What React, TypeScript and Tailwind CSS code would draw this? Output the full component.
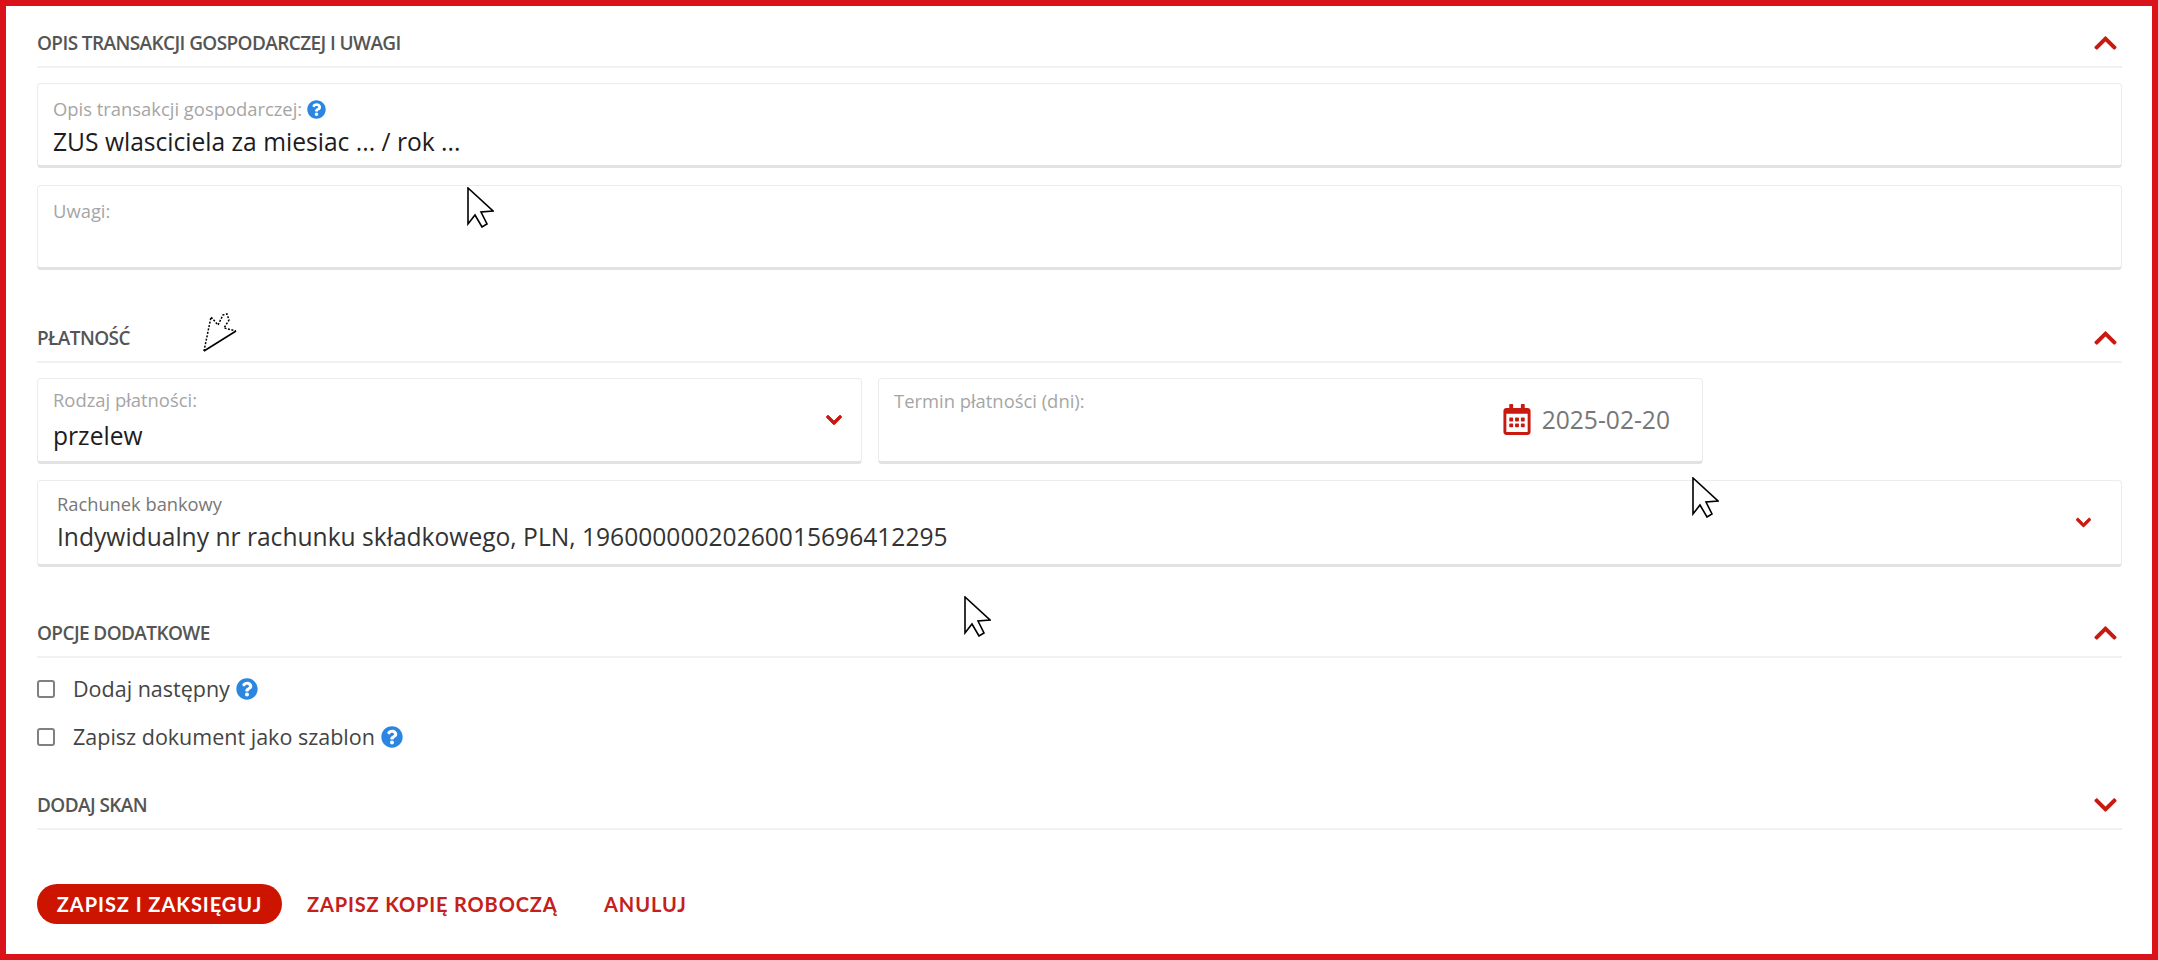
import React from "react";
import { FaChevronUp, FaChevronDown, FaQuestionCircle, FaRegCalendarAlt } from "react-icons/fa";

function Cursor({ className }: { className: string }) {
  return (
    <svg className={`absolute ${className}`} width="27" height="41" viewBox="0 0 27 41">
      <path d="M1 1 L1 37 L8 28 L15 40 L20 37 L14 25 L26 24 Z" fill="#fff" stroke="#000" strokeWidth="1.6" strokeLinejoin="miter" />
    </svg>
  );
}

function RotatedCursor({ className }: { className: string }) {
  return (
    <svg className={`absolute ${className}`} width="36" height="41" viewBox="0 0 36 41">
      <path d="M1 39 L8 5 L15 13 L20 3 L24 2 L26 8 L21 16 L33 19 Z" fill="#fff" />
      <path d="M1 39 L8 5 L15 13 L20 3 L24 2 L26 8 L21 16 L33 19" fill="none" stroke="#000" strokeWidth="1.5" strokeDasharray="2 1.5" />
      <path d="M1 39 L33 19" fill="none" stroke="#000" strokeWidth="1.6" />
    </svg>
  );
}

function Heading({ title, open = true }: { title: string; open?: boolean }) {
  return (
    <div className="flex h-[49px] items-center justify-between border-b-2 border-[#f1f1f1] pr-[5px]">
      <span className="pt-[2px] text-[19px] font-semibold tracking-[-0.6px] text-[#555555]">{title}</span>
      {open ? (
        <FaChevronUp className="h-[26px] w-[23px] text-[#c91a12]" />
      ) : (
        <FaChevronDown className="h-[26px] w-[23px] text-[#c91a12]" />
      )}
    </div>
  );
}

function Help({ size }: { size: string }) {
  return <FaQuestionCircle className={`${size} text-[#2b86e2]`} />;
}

function SelectChevron({ size }: { size: string }) {
  return <FaChevronDown className={`${size} text-[#c91a12]`} stroke="currentColor" strokeWidth={25} />;
}

function Field({ children, className }: { children: React.ReactNode; className: string }) {
  return (
    <div className={`rounded-[4px] border border-[#ececec] border-b-[3px] border-b-[#e2e2e2] bg-white ${className}`}>
      {children}
    </div>
  );
}

export default function App() {
  return (
    <div
      className="relative box-border h-[960px] w-full overflow-hidden border-[6px] border-[#da131b] bg-white pl-[31px] pr-[30px] pt-[13px]"
      style={{ fontFamily: '"Open Sans", sans-serif' }}
    >
      <Heading title="OPIS TRANSAKCJI GOSPODARCZEJ I UWAGI" />
      <Field className="mt-[15px] h-[85px] px-[15px] pt-[14px]">
        <div className="flex h-[22px] items-center gap-[5px] text-[18.4px] text-[#a5a5a5]">
          Opis transakcji gospodarczej:
          <Help size="h-[19px] w-[19px]" />
        </div>
        <div className="mt-[6px] h-[32px] text-[24.6px] leading-[32px] text-[#1c1c1c]">
          ZUS wlasciciela za miesiac ... / rok ...
        </div>
      </Field>
      <Field className="mt-[17px] h-[85px] px-[15px] pt-[14px]">
        <div className="h-[22px] text-[18.4px] leading-[22px] text-[#a5a5a5]">Uwagi:</div>
      </Field>

      <div className="mt-[44px]">
        <Heading title="PŁATNOŚĆ" />
      </div>
      <div className="mt-[15px] flex gap-[16px]">
        <Field className="flex h-[86px] w-[825px] items-center justify-between pl-[15px] pr-[19px]">
          <div>
            <div className="h-[22px] text-[18.4px] leading-[22px] text-[#a5a5a5]">Rodzaj płatności:</div>
            <div className="mt-[9px] h-[32px] text-[24.6px] leading-[32px] text-[#1c1c1c]">przelew</div>
          </div>
          <SelectChevron size="h-[18px] w-[16px]" />
        </Field>
        <Field className="flex h-[86px] w-[825px] items-center justify-between pl-[15px] pr-[32px]">
          <div className="h-[60px] text-[18.4px] leading-[22px] text-[#a5a5a5]">Termin płatności (dni):</div>
          <div className="flex items-center gap-[11px]">
            <FaRegCalendarAlt className="h-[31px] w-[28px] text-[#c91a12]" />
            <span className="text-[24.6px] text-[#777777]">2025-02-20</span>
          </div>
        </Field>
      </div>
      <Field className="mt-[16px] flex h-[87px] items-center justify-between pl-[19px] pr-[30px]">
        <div>
          <div className="h-[22px] text-[18.3px] leading-[22px] text-[#777777]">Rachunek bankowy</div>
          <div className="mt-[6px] h-[32px] text-[24.6px] leading-[32px] text-[#333333]">
            Indywidualny nr rachunku składkowego, PLN, 19600000020260015696412295
          </div>
        </div>
        <SelectChevron size="h-[17px] w-[15px]" />
      </Field>

      <div className="mt-[42px]">
        <Heading title="OPCJE DODATKOWE" />
      </div>
      <div className="mt-[13px] flex h-[36px] items-center text-[21.5px] text-[#444444]">
        <span className="mr-[18px] h-[18px] w-[18px] rounded-[3px] border-2 border-[#808080]" />
        <span className="mr-[6px]">Dodaj następny</span>
        <Help size="h-[22px] w-[22px]" />
      </div>
      <div className="mt-[12px] flex h-[36px] items-center text-[21.5px] text-[#444444]">
        <span className="mr-[18px] h-[18px] w-[18px] rounded-[3px] border-2 border-[#808080]" />
        <span className="mr-[6px]">Zapisz dokument jako szablon</span>
        <Help size="h-[22px] w-[22px]" />
      </div>

      <div className="mt-[26px]">
        <Heading title="DODAJ SKAN" open={false} />
      </div>

      <div className="mt-[54px] flex items-center" style={{ fontFamily: '"Lato", sans-serif' }}>
        <button className="flex h-[40px] w-[245px] items-center justify-center rounded-full bg-[#cc1400] text-[20px] font-bold tracking-[0.95px] text-white">
          ZAPISZ I ZAKSIĘGUJ
        </button>
        <span className="ml-[25px] w-[297px] text-[20px] font-bold tracking-[0.85px] text-[#c4201c]">ZAPISZ KOPIĘ ROBOCZĄ</span>
        <span className="text-[20px] font-bold tracking-[0.95px] text-[#c4201c]">ANULUJ</span>
      </div>

      <Cursor className="left-[461px] top-[181px]" />
      <RotatedCursor className="left-[197px] top-[306px]" />
      <Cursor className="left-[1686px] top-[471px]" />
      <Cursor className="left-[958px] top-[590px]" />
    </div>
  );
}
